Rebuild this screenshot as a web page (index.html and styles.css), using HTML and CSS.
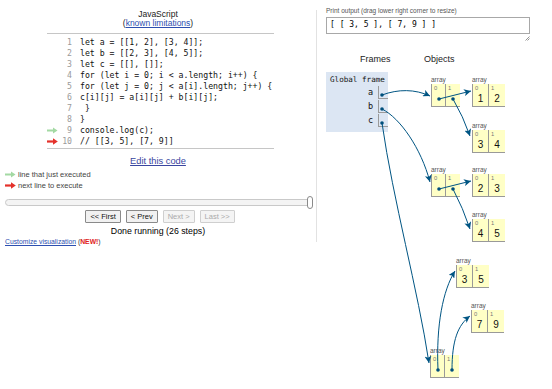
FILE: index.html
```html
<!DOCTYPE html>
<html>
<head>
<meta charset="utf-8">
<link rel="stylesheet" href="styles.css">
</head>
<body>
<div class="page">
  <div class="left">
    <div class="title">JavaScript</div>
    <div class="title">(<a href="#" class="link">known limitations</a>)</div>
    <div class="code">
      <div class="ln"><span class="arr"></span><span class="num">1</span><span class="src">let a = [[1, 2], [3, 4]];</span></div>
      <div class="ln"><span class="arr"></span><span class="num">2</span><span class="src">let b = [[2, 3], [4, 5]];</span></div>
      <div class="ln"><span class="arr"></span><span class="num">3</span><span class="src">let c = [[], []];</span></div>
      <div class="ln"><span class="arr"></span><span class="num">4</span><span class="src">for (let i = 0; i &lt; a.length; i++) {</span></div>
      <div class="ln"><span class="arr"></span><span class="num">5</span><span class="src">for (let j = 0; j &lt; a[i].length; j++) {</span></div>
      <div class="ln"><span class="arr"></span><span class="num">6</span><span class="src">c[i][j] = a[i][j] + b[i][j];</span></div>
      <div class="ln"><span class="arr"></span><span class="num">7</span><span class="src"> }</span></div>
      <div class="ln"><span class="arr"></span><span class="num">8</span><span class="src">}</span></div>
      <div class="ln"><span class="arr"><svg width="11" height="7" viewBox="0 0 11 7"><path d="M0 3.5H7" stroke="#a3d9a3" stroke-width="2"/><path d="M6 0.5L10.5 3.5L6 6.5Z" fill="#a3d9a3"/></svg></span><span class="num">9</span><span class="src">console.log(c);</span></div>
      <div class="ln"><span class="arr"><svg width="11" height="7" viewBox="0 0 11 7"><path d="M0 3.5H7" stroke="#e4312b" stroke-width="2.2"/><path d="M6 0.2L10.8 3.5L6 6.8Z" fill="#e4312b"/></svg></span><span class="num">10</span><span class="src">// [[3, 5], [7, 9]]</span></div>
    </div>
    <div class="edit"><a href="#" class="editlink">Edit this code</a></div>
    <div class="legend">
      <div class="lrow"><svg width="11" height="7" viewBox="0 0 11 7"><path d="M0 3.5H7" stroke="#a3d9a3" stroke-width="2"/><path d="M6 0.5L10.5 3.5L6 6.5Z" fill="#a3d9a3"/></svg><span>line that just executed</span></div>
      <div class="lrow"><svg width="11" height="7" viewBox="0 0 11 7"><path d="M0 3.5H7" stroke="#e4312b" stroke-width="2.2"/><path d="M6 0.2L10.8 3.5L6 6.8Z" fill="#e4312b"/></svg><span>next line to execute</span></div>
    </div>
    <div class="slider"><div class="thumb"></div></div>
    <div class="buttons">
      <button class="btn">&lt;&lt; First</button>
      <button class="btn">&lt; Prev</button>
      <button class="btn dis">Next &gt;</button>
      <button class="btn dis">Last &gt;&gt;</button>
    </div>
    <div class="done">Done running (26 steps)</div>
    <div class="custom"><a href="#" class="clink">Customize visualization</a> (<span class="new">NEW!</span>)</div>
  </div>

  <div class="right">
    <div class="plabel">Print output (drag lower right corner to resize)</div>
    <div class="pout">[ [ 3, 5 ], [ 7, 9 ] ]</div>
    <div class="handle"><svg width="5" height="5" viewBox="0 0 5 5"><path d="M0.5 4.5L4.5 0.5M2.5 4.5L4.5 2.5" stroke="#777" stroke-width="0.8"/></svg></div>
    <div class="viz">
      <div class="fcol">
        <div class="hdr fhdr">Frames</div>
        <div class="frame">
          <div class="fname">Global frame</div>
          <div class="var"><span class="vname">a</span><span class="vcell"></span></div>
          <div class="var"><span class="vname">b</span><span class="vcell"></span></div>
          <div class="var"><span class="vname">c</span><span class="vcell"></span></div>
        </div>
      </div>
      <div class="ocol">
        <div class="hdr ohdr">Objects</div>
        <div class="canvas">
          <div class="heap" style="left:11px;top:3px"><div class="alabel">array</div><div class="cells"><div class="cell pc"><span class="idx">0</span></div><div class="cell pc pc2"><span class="idx">1</span></div></div></div>
          <div class="heap" style="left:52px;top:3px"><div class="alabel">array</div><div class="cells"><div class="cell vc"><span class="idx">0</span><span class="val">1</span></div><div class="cell vc vc2"><span class="idx">1</span><span class="val">2</span></div></div></div>
          <div class="heap" style="left:52px;top:49px"><div class="alabel">array</div><div class="cells"><div class="cell vc"><span class="idx">0</span><span class="val">3</span></div><div class="cell vc vc2"><span class="idx">1</span><span class="val">4</span></div></div></div>
          <div class="heap" style="left:11px;top:93px"><div class="alabel">array</div><div class="cells"><div class="cell pc"><span class="idx">0</span></div><div class="cell pc pc2"><span class="idx">1</span></div></div></div>
          <div class="heap" style="left:52px;top:93px"><div class="alabel">array</div><div class="cells"><div class="cell vc"><span class="idx">0</span><span class="val">2</span></div><div class="cell vc vc2"><span class="idx">1</span><span class="val">3</span></div></div></div>
          <div class="heap" style="left:52px;top:138px"><div class="alabel">array</div><div class="cells"><div class="cell vc"><span class="idx">0</span><span class="val">4</span></div><div class="cell vc vc2"><span class="idx">1</span><span class="val">5</span></div></div></div>
          <div class="heap" style="left:36px;top:184px"><div class="alabel">array</div><div class="cells"><div class="cell vc"><span class="idx">0</span><span class="val">3</span></div><div class="cell vc vc2"><span class="idx">1</span><span class="val">5</span></div></div></div>
          <div class="heap" style="left:51px;top:229px"><div class="alabel">array</div><div class="cells"><div class="cell vc"><span class="idx">0</span><span class="val">7</span></div><div class="cell vc vc2"><span class="idx">1</span><span class="val">9</span></div></div></div>
          <div class="heap" style="left:10px;top:274px"><div class="alabel">array</div><div class="cells"><div class="cell pc"><span class="idx">0</span></div><div class="cell pc pc2"><span class="idx">1</span></div></div></div>
        </div>
      </div>
    </div>
  </div>

  <svg class="arrows" width="552" height="389" viewBox="0 0 552 389">
    <defs>
      <marker id="ah" markerUnits="userSpaceOnUse" markerWidth="8" markerHeight="7" refX="7" refY="3.5" orient="auto">
        <path d="M0 0L7 3.5L0 7L1.8 3.5Z" fill="#005583"/>
      </marker>
    </defs>
    <g fill="none" stroke="#005583" stroke-width="1" marker-end="url(#ah)">
      <path d="M382 95C398 89 415 89 430 96"/>
      <path d="M439 99L471 91"/>
      <path d="M453 99Q463 116 470 136"/>
      <path d="M382 109C400 118 421 148 430 182"/>
      <path d="M439 189L471 181"/>
      <path d="M453 189Q463 208 470 229"/>
      <path d="M382 123C393 200 418 290 429 363"/>
      <path d="M438 370C436 325 443 290 455 271"/>
      <path d="M452 370C452 340 458 325 470 316"/>
    </g>
    <g fill="#004f7c">
      <circle cx="382" cy="95" r="1.8"/>
      <circle cx="382" cy="109" r="1.8"/>
      <circle cx="382" cy="123" r="1.8"/>
      <circle cx="439" cy="99" r="1.8"/>
      <circle cx="453" cy="99" r="1.8"/>
      <circle cx="439" cy="189" r="1.8"/>
      <circle cx="453" cy="189" r="1.8"/>
      <circle cx="438" cy="370" r="1.8"/>
      <circle cx="452" cy="370" r="1.8"/>
    </g>
  </svg>
</div>
</body>
</html>
```
FILE: styles.css
```css
body {
  margin: 0;
  font-family: "Liberation Sans", Arial, sans-serif;
  background: #fff;
  color: #000;
}
.page {
  display: flex;
  width: 552px;
  height: 389px;
  position: relative;
  overflow: hidden;
}
.left {
  width: 316px;
  height: 232px;
  margin-top: 10px;
  border-right: 1px solid #e2e2e2;
  flex: none;
}
.title {
  text-align: center;
  font-size: 8.5px;
  line-height: 9px;
  color: #222;
}
.link {
  color: #2d4fb0;
}
.code {
  margin: 5px 0 0 47px;
  width: 227px;
  border-top: 1px solid #c6c6c6;
  border-bottom: 1px solid #c6c6c6;
  padding: 2.5px 0 0.5px;
  font-family: "DejaVu Sans Mono", monospace;
  font-size: 8.2px;
  line-height: 11.1px;
}
.ln {
  display: flex;
  height: 11.1px;
  white-space: pre;
}
.arr {
  width: 12px;
  flex: none;
  display: flex;
  align-items: center;
}
.num {
  width: 13px;
  flex: none;
  text-align: right;
  color: #9a9a9a;
}
.src {
  padding-left: 8px;
  color: #111;
}
.edit {
  margin-top: 7.5px;
  text-align: center;
  font-size: 9.3px;
  line-height: 11px;
}
.editlink {
  color: #3a46a0;
}
.legend {
  margin-top: 2px;
  padding-left: 5px;
  font-size: 7.5px;
  color: #444;
}
.lrow {
  display: flex;
  align-items: center;
  gap: 2px;
  height: 11px;
}
.slider {
  position: relative;
  margin: 8px 0 0 5px;
  width: 306px;
  height: 5px;
  border: 1px solid #c9c9c9;
  border-radius: 4px;
  background: #f4f4f4;
}
.thumb {
  position: absolute;
  right: -1px;
  top: -4px;
  width: 4px;
  height: 11px;
  border: 1px solid #8a8a8a;
  border-radius: 3px;
  background: #fff;
}
.buttons {
  margin-top: 4px;
  display: flex;
  justify-content: center;
  gap: 5px;
  padding-left: 4px;
}
.btn {
  font-family: "Liberation Sans", Arial, sans-serif;
  font-size: 7.5px;
  height: 13px;
  padding: 0 4px;
  line-height: 11px;
  border: 1px solid #8a8a8a;
  background: #f1f1f1;
  color: #111;
  border-radius: 1px;
}
.btn.dis {
  color: #aaa;
  border-color: #cfcfcf;
  background: #f4f4f4;
}
.done {
  margin-top: 3px;
  text-align: center;
  font-size: 8.8px;
  line-height: 10px;
}
.custom {
  margin-top: 0.5px;
  padding-left: 5px;
  font-size: 6.8px;
  line-height: 9px;
  color: #333;
}
.clink {
  color: #2d4fb0;
}
.new {
  color: #e02020;
  font-weight: bold;
}
.right {
  flex: 1;
  padding-left: 9px;
}
.plabel {
  margin-top: 7px;
  font-size: 6.5px;
  line-height: 8px;
  color: #555;
}
.pout {
  margin-top: 2px;
  height: 15px;
  border: 1px solid #a8a8a8;
  font-family: "DejaVu Sans Mono", monospace;
  font-size: 8px;
  line-height: 13px;
  padding-left: 3px;
  box-sizing: content-box;
  width: 199px;
}
.handle {
  width: 204px;
  height: 8px;
  display: flex;
  justify-content: flex-end;
  align-items: center;
}
.viz {
  margin-top: 11px;
  display: flex;
}
.fcol {
  width: 62px;
  flex: none;
}
.hdr {
  font-size: 9px;
  line-height: 12px;
  color: #222;
}
.fhdr {
  padding-left: 34px;
}
.ohdr {
  padding-left: 4px;
}
.frame {
  margin-top: 7px;
  height: 60px;
  background: #dce6f3;
  box-sizing: border-box;
  padding-top: 3px;
}
.fname {
  font-family: "DejaVu Sans Mono", monospace;
  font-size: 7.6px;
  line-height: 10px;
  padding-left: 4px;
  color: #111;
}
.var {
  display: flex;
  justify-content: flex-end;
  height: 14px;
  align-items: center;
}
.vname {
  font-family: "DejaVu Sans Mono", monospace;
  font-size: 8.5px;
  padding-right: 5px;
  color: #111;
}
.vcell {
  width: 9px;
  height: 12px;
  border-left: 1px solid #9a9a9a;
  border-bottom: 1px solid #9a9a9a;
}
.ocol {
  margin-left: 32px;
  width: 112px;
}
.canvas {
  position: relative;
  margin-top: 7px;
  height: 310px;
}
.heap {
  position: absolute;
}
.alabel {
  font-size: 6.5px;
  line-height: 9px;
  color: #555;
}
.cells {
  display: flex;
}
.cell {
  position: relative;
  height: 23px;
  box-sizing: border-box;
  background: #ffffc6;
  border-left: 1px solid #999;
  border-bottom: 1px solid #999;
}
.pc { width: 14px; }
.pc2 { width: 15px; }
.vc { width: 16px; }
.vc2 { width: 17px; }
.idx {
  position: absolute;
  left: 2px;
  top: 1px;
  font-size: 5.8px;
  line-height: 7px;
  color: #777;
}
.val {
  position: absolute;
  left: 0;
  right: 0;
  top: 9px;
  text-align: center;
  font-size: 10px;
  line-height: 11px;
  color: #111;
}
.arrows {
  position: absolute;
  left: 0;
  top: 0;
  pointer-events: none;
}
```
